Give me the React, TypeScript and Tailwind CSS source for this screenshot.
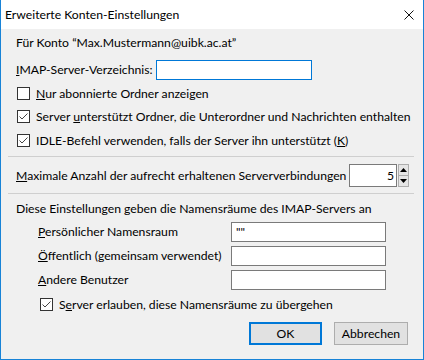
import React from 'react';

function CheckBox({ checked }: { checked?: boolean }) {
  return (
    <span className="w-[13px] h-[13px] border border-[#333333] bg-white flex items-center justify-center shrink-0">
      {checked && (
        <svg width="11" height="11" viewBox="0 0 11 11">
          <path d="M1.5 5.5 L4 8 L9.5 2.5" fill="none" stroke="#444444" strokeWidth="1" />
        </svg>
      )}
    </span>
  );
}

function TextBox({ value, className }: { value?: string; className: string }) {
  return (
    <div className={`h-[20px] bg-white border flex items-center px-[4px] shrink-0 ${className}`}>
      {value}
    </div>
  );
}

export default function App() {
  return (
    <div className="w-[424px] h-[360px] border-x border-b border-[#1883d7] bg-[#f0f0f0] flex flex-col text-[12.2px] leading-[16px] text-black whitespace-nowrap font-['Segoe_UI','Lato',sans-serif]">
      {/* title bar */}
      <div className="h-[29px] bg-white flex items-center justify-between pl-[4px] pr-[9px] shrink-0">
        <span>Erweiterte Konten-Einstellungen</span>
        <svg width="10" height="10" viewBox="0 0 10 10">
          <path d="M0.5 0.5 L9.5 9.5 M9.5 0.5 L0.5 9.5" stroke="#111111" strokeWidth="1" />
        </svg>
      </div>

      <div className="ml-[15px] mt-[6px]">Für Konto “Max.Mustermann@uibk.ac.at”</div>

      <div className="flex items-center mt-[9px] ml-[15px] h-[20px]">
        <span className="w-[140px] shrink-0">
          <span className="underline">I</span>MAP-Server-Verzeichnis:
        </span>
        <TextBox className="w-[156px] border-[#0078d7]" />
      </div>

      <div className="flex items-center gap-[6px] ml-[16px] mt-[7px] h-[13px]">
        <CheckBox />
        <span>
          <span className="underline">N</span>ur abonnierte Ordner anzeigen
        </span>
      </div>
      <div className="flex items-center gap-[6px] ml-[16px] mt-[10px] h-[13px]">
        <CheckBox checked />
        <span>
          Server <span className="underline">u</span>nterstützt Ordner, die Unterordner und Nachrichten enthalten
        </span>
      </div>
      <div className="flex items-center gap-[6px] ml-[16px] mt-[11px] h-[13px]">
        <CheckBox checked />
        <span>
          IDLE-Befehl verwenden, falls der Server ihn unterstützt (<span className="underline">K</span>)
        </span>
      </div>

      <div className="h-px w-[406px] ml-[7px] mt-[9px] bg-[#cfcfcf]" />

      <div className="flex items-center mt-[7px] ml-[15px] h-[23px]">
        <span className="w-[333px] shrink-0">
          <span className="underline">M</span>aximale Anzahl der aufrecht erhaltenen Serververbindungen
        </span>
        <div className="w-[48px] h-[23px] bg-white border border-[#7a7a7a] flex items-center justify-end pr-[2px] shrink-0">5</div>
        <div className="w-[11px] h-[23px] flex flex-col ml-px shrink-0">
          <div className="h-[12px] border border-[#adadad] bg-[#e5e5e5] flex items-center justify-center">
            <svg width="7" height="4" viewBox="0 0 7 4">
              <path d="M3.5 0 L7 4 L0 4 Z" fill="#000000" />
            </svg>
          </div>
          <div className="h-[11px] border border-t-0 border-[#adadad] bg-[#e5e5e5] flex items-center justify-center">
            <svg width="7" height="4" viewBox="0 0 7 4">
              <path d="M0 0 L7 0 L3.5 4 Z" fill="#000000" />
            </svg>
          </div>
        </div>
      </div>

      <div className="h-px w-[406px] ml-[7px] mt-[6px] bg-[#cfcfcf]" />

      <div className="ml-[15px] mt-[7px]">Diese Einstellungen geben die Namensräume des IMAP-Servers an</div>

      <div className="flex items-center ml-[37px] mt-[5px] h-[20px]">
        <span className="w-[193px] shrink-0">
          <span className="underline">P</span>ersönlicher Namensraum
        </span>
        <TextBox value={'""'} className="w-[155px] border-[#7a7a7a]" />
      </div>
      <div className="flex items-center ml-[37px] mt-[4px] h-[20px]">
        <span className="w-[193px] shrink-0">
          <span className="underline">Ö</span>ffentlich (gemeinsam verwendet)
        </span>
        <TextBox className="w-[155px] border-[#7a7a7a]" />
      </div>
      <div className="flex items-center ml-[37px] mt-[4px] h-[20px]">
        <span className="w-[193px] shrink-0">
          <span className="underline">A</span>ndere Benutzer
        </span>
        <TextBox className="w-[155px] border-[#7a7a7a]" />
      </div>

      <div className="flex items-center gap-[6px] ml-[39px] mt-[8px] h-[13px]">
        <CheckBox checked />
        <span>
          S<span className="underline">e</span>rver erlauben, diese Namensräume zu übergehen
        </span>
      </div>

      <div className="flex justify-end gap-[12px] pr-[15px] mt-[11px]">
        <button className="w-[73px] h-[23px] bg-[#e1e1e1] border-2 border-[#0078d7]">OK</button>
        <button className="w-[74px] h-[23px] bg-[#e1e1e1] border border-[#adadad]">Abbrechen</button>
      </div>
    </div>
  );
}
